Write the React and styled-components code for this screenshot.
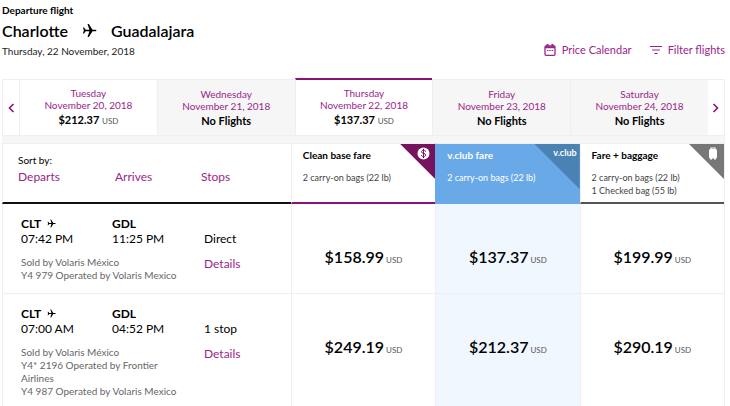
import React from 'react';
import styled, { createGlobalStyle, css } from 'styled-components';

const magenta = '#9b2589';
const plum = '#76135f';
const accent = '#8a1275';
const line = '#efefef';

const GlobalStyle = createGlobalStyle`
  *, *::before, *::after { box-sizing: border-box; }
  body { margin: 0; background: #fff; color: #000; font-family: Lato, sans-serif; font-size: 10px; line-height: 13px; }
  button { font: inherit; color: inherit; background: none; border: 0; padding: 0; cursor: pointer; }
  a { color: ${magenta}; text-decoration: none; }
  h1, h2, p { margin: 0; }
`;

const Page = styled.main`
  padding: 3px 5px 0 2px;
`;

const Header = styled.header`
  display: flex;
  justify-content: space-between;
  align-items: flex-end;
  height: 55px;
`;

const Eyebrow = styled.h2`
  font-size: 10px;
  line-height: 14px;
  font-weight: 700;
`;

const Route = styled.h1`
  display: flex;
  align-items: center;
  gap: 14px;
  font-size: 16px;
  line-height: 27px;
  font-weight: 600;
`;

const TravelDate = styled.p`
  font-size: 10px;
  line-height: 14px;
  color: #222;
`;

const Tools = styled.div`
  display: flex;
  gap: 18px;
`;

const Tool = styled.button`
  display: flex;
  align-items: center;
  gap: 6px;
  color: ${magenta};
  font-size: 11px;
  line-height: 16px;
`;

const Days = styled.nav`
  display: flex;
  height: 57px;
  margin-top: 21px;
  border: 1px solid ${line};
`;

const Arrow = styled.button`
  display: flex;
  align-items: center;
  justify-content: center;
  width: 16px;
  color: ${accent};
`;

const Day = styled.button`
  flex: 1;
  display: flex;
  flex-direction: column;
  align-items: center;
  justify-content: center;
  padding-top: 1px;
  border-left: 1px solid ${line};
  color: ${magenta};
  line-height: 12px;
  background: ${(p) => (p.$empty ? '#f6f6f6' : '#fff')};
  ${(p) => p.$selected && css`
    margin-top: -2px;
    border-top: 2px solid ${accent};
  `}
`;

const DayFare = styled.strong`
  color: #000;
  font-size: 11px;
  line-height: 17px;
  font-weight: 700;
`;

const Currency = styled.small`
  font-size: 8px;
  font-weight: 400;
  color: #555;
`;

const Results = styled.table`
  width: 100%;
  table-layout: fixed;
  border-collapse: separate;
  border-spacing: 0;
  border-top: 7px solid #f6f6f6;
  border-right: 1px solid ${line};

  tbody tr:last-child td { border-bottom: 0; }
`;

const InfoCol = styled.col`
  width: 40%;
`;

const SortCell = styled.th`
  height: 61px;
  padding: 10px 15px 0;
  vertical-align: top;
  text-align: left;
  font-weight: 400;
  border-top: 1px solid ${line};
  border-left: 1px solid ${line};
  border-bottom: 2px solid #111;
`;

const SortRow = styled.div`
  display: grid;
  grid-template-columns: 97px 86px 1fr;
  line-height: 20px;
  font-size: 12px;
`;

const SortButton = styled.button`
  color: ${magenta};
  text-align: left;
`;

const FareHead = styled.th`
  position: relative;
  padding: 5px 11px 0;
  vertical-align: top;
  text-align: left;
  font-weight: 400;
  font-size: 9px;
  line-height: 13px;
  color: ${(p) => (p.$club ? '#fff' : '#444')};
  background: ${(p) => (p.$club ? '#6aa9e7' : '#fff')};
  border-top: 1px solid ${line};
  border-left: 1px solid ${(p) => (p.$club ? '#6aa9e7' : line)};
  border-bottom: 2px solid ${(p) => p.$accent};
`;

const FareName = styled.div`
  margin-bottom: 9px;
  font-size: 10px;
  font-weight: 700;
  color: ${(p) => (p.$club ? '#fff' : '#000')};
`;

const Corner = styled.span`
  position: absolute;
  top: 0;
  right: 0;
  display: flex;
  justify-content: flex-end;
  width: ${(p) => p.$size}px;
  height: ${(p) => p.$size}px;
  padding: 3px 5px;
  color: #fff;
  background: ${(p) => p.$color};
  clip-path: polygon(0 0, 100% 0, 100% 100%);
`;

const ClubTag = styled.b`
  margin-right: -2px;
  font-size: 9px;
  line-height: 12px;
`;

const Cell = styled.td`
  padding: 12px 18px 0;
  height: ${(p) => p.$height}px;
  vertical-align: top;
  border-left: 1px solid ${line};
  border-bottom: 1px solid ${line};
`;

const FareCell = styled.td`
  padding: 43px 0 0;
  text-align: center;
  vertical-align: top;
  background: ${(p) => (p.$club ? '#f1f7fe' : '#fff')};
  border-left: 1px solid ${line};
  border-bottom: 1px solid ${line};
`;

const Price = styled.button`
  display: inline-flex;
  align-items: baseline;
  gap: 2px;
  font-size: 16px;
  line-height: 20px;
  font-weight: 600;
`;

const Flight = styled.div`
  display: grid;
  grid-template-columns: 91px 92px 1fr;
  align-items: end;
  font-size: 12px;
  line-height: 15px;
`;

const Airport = styled.div`
  display: flex;
  align-items: center;
  gap: 6px;
  font-weight: 700;
`;

const Notes = styled.div`
  grid-column: span 2;
  align-self: start;
  margin-top: 10px;
  padding-right: 20px;
  font-size: 10px;
  line-height: 13px;
  color: #666;
`;

const Details = styled.a`
  align-self: start;
  margin-top: 10px;
`;

function Plane({ size }) {
  return (
    <svg width={size} height={size} viewBox="0 0 16 16" aria-hidden="true">
      <path d="M1 4.800h1.200L3.900 7.200h4L5.900 1h1.400l3.900 6.200h3.300c1.200 0 1.200 1.600 0 1.600h-3.300L7.300 15H5.900l2-6.200h-4l-1.700 2.400H1L2 8z" fill="currentColor" />
    </svg>
  );
}

function CalendarIcon() {
  return (
    <svg width="12" height="12" viewBox="0 0 12 12" fill="none" stroke="currentColor" aria-hidden="true">
      <rect x="1" y="2" width="10" height="9.300" rx="1" strokeWidth="1.300" />
      <path d="M1 3.200h10M3.500 0v3M8.500 0v3" strokeWidth="2" />
      <path d="M3 6.500h1.500M5.300 6.500h1.500M7.600 6.500h1.500" />
    </svg>
  );
}

function FilterIcon() {
  return (
    <svg width="12" height="12" viewBox="0 0 12 12" stroke="currentColor" strokeWidth="1.200" aria-hidden="true">
      <path d="M0 2.500h12M2 6h8M4.500 9.500h3" />
    </svg>
  );
}

function Chevron({ d }) {
  return (
    <svg width="7" height="10" viewBox="0 0 7 10" fill="none" stroke="currentColor" strokeWidth="1.600" aria-hidden="true">
      <path d={d} />
    </svg>
  );
}

function CoinIcon() {
  return (
    <svg width="13" height="13" viewBox="0 0 13 13" aria-hidden="true">
      <circle cx="6.500" cy="6.500" r="6" fill="#fff" />
      <path d="M8.600 4.700C8.300 2.700 4.500 2.800 4.500 4.800c0 2 4.200 1.200 4.200 3.300 0 2-4.100 2.100-4.400-.1M6.500 1.800v9.400" fill="none" stroke={plum} strokeWidth="1" />
    </svg>
  );
}

function BagIcon() {
  return (
    <svg width="12" height="13" viewBox="0 0 12 13" aria-hidden="true">
      <path d="M4 2.500V1h4v1.500" fill="none" stroke="#fff" strokeWidth="1.200" />
      <rect x="2" y="2" width="8" height="9.500" rx="1.500" fill="#fff" />
      <path d="M3 11h2v1.500H3zM7 11h2v1.500H7z" fill="#fff" />
    </svg>
  );
}

const days = [
  { name: 'Tuesday', date: 'November 20, 2018', fare: '$212.37' },
  { name: 'Wednesday', date: 'November 21, 2018' },
  { name: 'Thursday', date: 'November 22, 2018', fare: '$137.37', selected: true },
  { name: 'Friday', date: 'November 23, 2018' },
  { name: 'Saturday', date: 'November 24, 2018' },
];

const flights = [
  {
    departs: '07:42 PM', arrives: '11:25 PM', stops: 'Direct', height: 90,
    notes: ['Sold by Volaris México', 'Y4 979 Operated by Volaris Mexico'],
    fares: ['$158.99', '$137.37', '$199.99'],
  },
  {
    departs: '07:00 AM', arrives: '04:52 PM', stops: '1 stop', height: 112,
    notes: ['Sold by Volaris México', 'Y4* 2196 Operated by Frontier Airlines', 'Y4 987 Operated by Volaris Mexico'],
    fares: ['$249.19', '$212.37', '$290.19'],
  },
];

export default function App() {
  return (
    <Page>
      <GlobalStyle />
      <Header>
        <div>
          <Eyebrow>Departure flight</Eyebrow>
          <Route>Charlotte <Plane size={15} /> Guadalajara</Route>
          <TravelDate>Thursday, 22 November, 2018</TravelDate>
        </div>
        <Tools>
          <Tool><CalendarIcon />Price Calendar</Tool>
          <Tool><FilterIcon />Filter flights</Tool>
        </Tools>
      </Header>
      <Days aria-label="Departure day">
        <Arrow aria-label="Previous days"><Chevron d="M5.500 1l-4 4 4 4" /></Arrow>
        {days.map((day) => (
          <Day key={day.date} $empty={!day.fare} $selected={day.selected}>
            <span>{day.name}</span>
            <span>{day.date}</span>
            <DayFare>{day.fare ? <>{day.fare} <Currency>USD</Currency></> : 'No Flights'}</DayFare>
          </Day>
        ))}
        <Arrow aria-label="Next days"><Chevron d="M1.500 1l4 4-4 4" /></Arrow>
      </Days>
      <Results>
        <colgroup><InfoCol /><col /><col /><col /></colgroup>
        <thead>
          <tr>
            <SortCell scope="col">
              Sort by:
              <SortRow>
                <SortButton>Departs</SortButton>
                <SortButton>Arrives</SortButton>
                <SortButton>Stops</SortButton>
              </SortRow>
            </SortCell>
            <FareHead scope="col" $accent={accent}>
              <FareName>Clean base fare</FareName>
              2 carry-on bags (22 lb)
              <Corner $size={35} $color={plum}><CoinIcon /></Corner>
            </FareHead>
            <FareHead scope="col" $club $accent="#6aa9e7">
              <FareName $club>v.club fare</FareName>
              2 carry-on bags (22 lb)
              <Corner $size={45} $color="#4b82b4"><ClubTag>v.club</ClubTag></Corner>
            </FareHead>
            <FareHead scope="col" $accent="#555">
              <FareName>Fare + baggage</FareName>
              2 carry-on bags (22 lb)<br />1 Checked bag (55 lb)
              <Corner $size={35} $color="#777"><BagIcon /></Corner>
            </FareHead>
          </tr>
        </thead>
        <tbody>
          {flights.map((flight) => (
            <tr key={flight.departs}>
              <Cell $height={flight.height}>
                <Flight>
                  <div><Airport>CLT <Plane size={9} /></Airport>{flight.departs}</div>
                  <div><Airport>GDL</Airport>{flight.arrives}</div>
                  <div>{flight.stops}</div>
                  <Notes>{flight.notes.map((note) => <p key={note}>{note}</p>)}</Notes>
                  <Details href="#details">Details</Details>
                </Flight>
              </Cell>
              {flight.fares.map((fare, i) => (
                <FareCell key={fare} $club={i === 1}>
                  <Price>{fare} <Currency>USD</Currency></Price>
                </FareCell>
              ))}
            </tr>
          ))}
        </tbody>
      </Results>
    </Page>
  );
}
